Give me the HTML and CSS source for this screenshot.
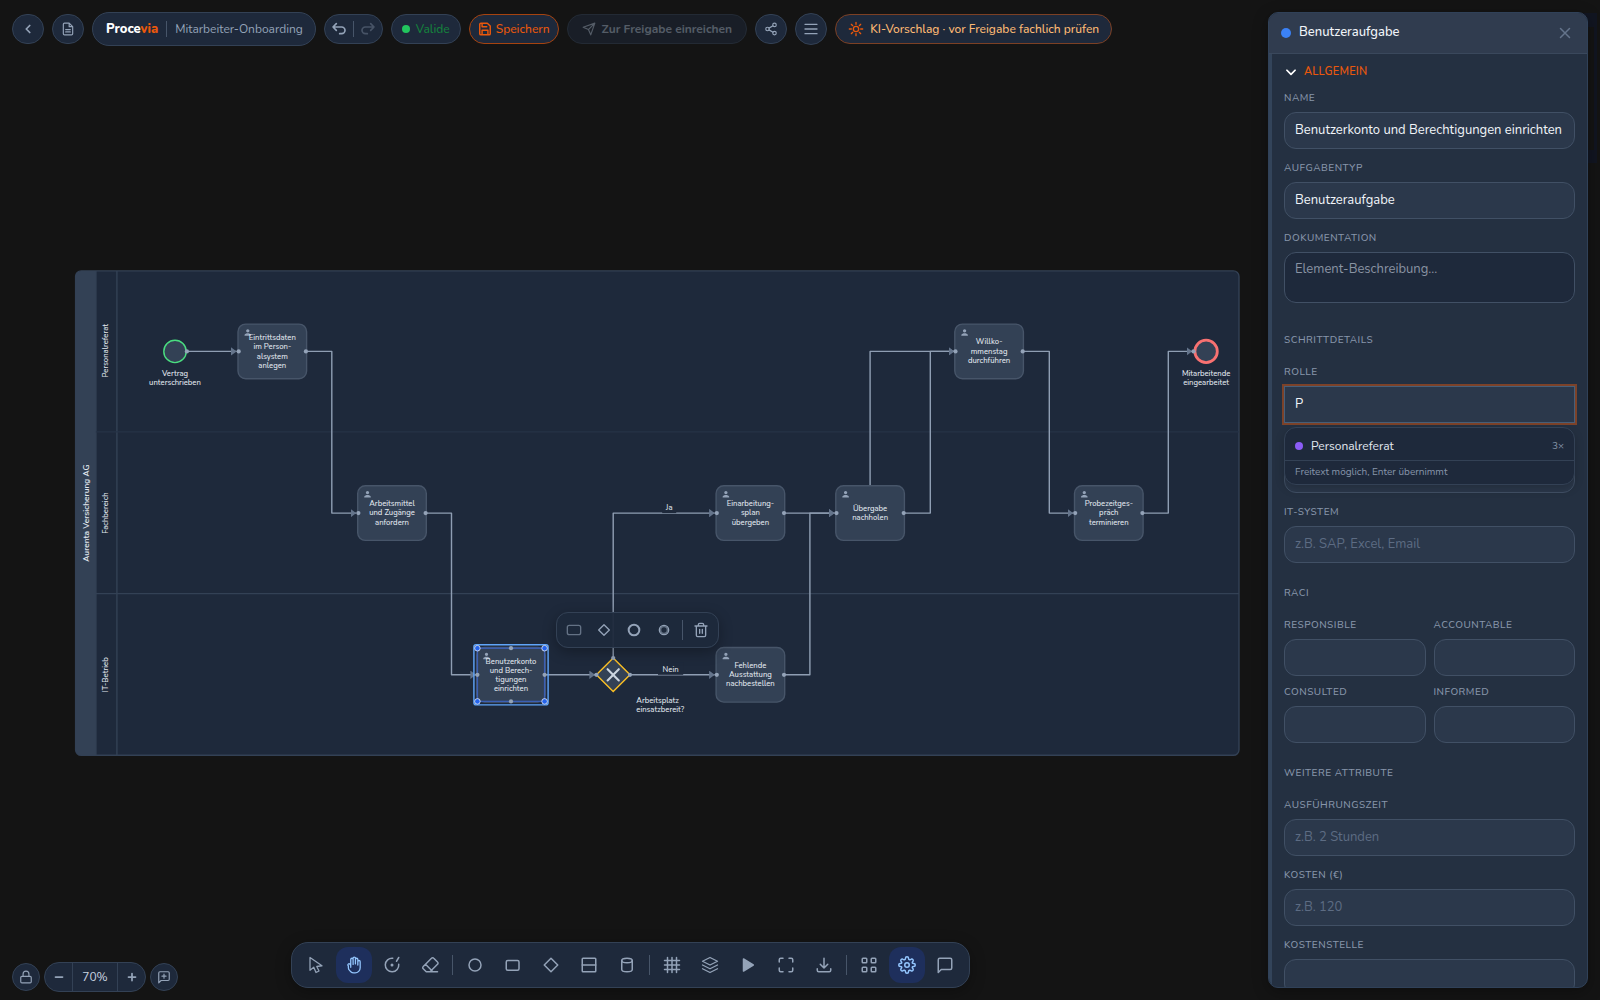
FILE: index.html
```html
<!DOCTYPE html>
<html lang="de">
<head>
<meta charset="utf-8">
<meta name="viewport" content="width=device-width, initial-scale=1">
<title>Procevia – Mitarbeiter-Onboarding</title>
<link rel="stylesheet" href="styles.css">
</head>
<body>
<div class="app">
  <main class="workspace">
    <svg class="diagram" role="img" aria-label="Prozessdiagramm Mitarbeiter-Onboarding">
      <defs>
        <symbol id="user" viewBox="0 0 24 24"><path d="M12 12c2.21 0 4-1.79 4-4s-1.79-4-4-4-4 1.79-4 4 1.79 4 4 4zm0 2c-2.67 0-8 1.34-8 4v2h16v-2c0-2.66-5.33-4-8-4z"/></symbol>
        <marker id="arrow" viewBox="0 0 8 12" refX="8" refY="6" markerWidth="8" markerHeight="12" markerUnits="userSpaceOnUse" orient="auto"><path class="arrowhead" d="M0 0 8 6 0 12z"/></marker>
      </defs>
      <g transform="scale(.7)">
        <rect class="pool" x="108" y="387" width="1662" height="692" rx="8"/>
        <path class="pool-title" d="M137 387H116a8 8 0 0 0-8 8v676a8 8 0 0 0 8 8h21z"/>
        <path class="lane-edge" d="M137 387V1079M167 387V1079M137 848H1770"/>
        <path class="lane-edge lane-edge-faint" d="M137 617H1770"/>
        <text class="pool-name" text-anchor="middle" transform="translate(127 733) rotate(-90)">Aurenta Versicherung AG</text>
        <text class="lane-name" text-anchor="middle" transform="translate(154 501) rotate(-90)">Personalreferat</text>
        <text class="lane-name" text-anchor="middle" transform="translate(154 733) rotate(-90)">Fachbereich</text>
        <text class="lane-name" text-anchor="middle" transform="translate(154 964) rotate(-90)">IT-Betrieb</text>

        <g class="flows" marker-end="url(#arrow)">
          <path d="M268 502H338"/>
          <path d="M437 502H474V733H509"/>
          <path d="M608 733H645V964H680"/>
          <path d="M778 964H850"/>
          <path d="M902 964H1021"/>
          <path d="M876 940V733H1021"/>
          <path d="M1120 733H1192"/>
          <path d="M1120 964H1157V733H1192"/>
          <path d="M1243 693V502H1363"/>
          <path d="M1291 733H1329V502H1363"/>
          <path d="M1462 502H1499V733H1533"/>
          <path d="M1632 733H1669V502H1703"/>
        </g>
        <rect class="flow-label-bg" x="946" y="716" width="20" height="17"/>
        <rect class="flow-label-bg" x="940" y="947" width="36" height="17"/>
        <text class="label" text-anchor="middle" x="956" y="729">Ja</text>
        <text class="label" text-anchor="middle" x="958" y="960">Nein</text>

        <circle class="event start" cx="250" cy="502" r="16"/>
        <text class="label" text-anchor="middle" x="250" y="537">Vertrag<tspan x="250" dy="1.2em">unterschrieben</tspan></text>
        <circle class="event end" cx="1723" cy="502" r="16"/>
        <text class="label" text-anchor="middle" x="1723" y="537">Mitarbeitende<tspan x="1723" dy="1.2em">eingearbeitet</tspan></text>

        <path class="gateway" d="M876 940 900 964 876 988 852 964z"/>
        <path class="gateway-x" d="M868 956 884 972M884 956 868 972"/>
        <text class="label" x="909" y="1004">Arbeitsplatz<tspan x="909" dy="1.2em">einsatzbereit?</tspan></text>

        <g class="task" transform="translate(389 502)">
          <rect x="-49" y="-39" width="98" height="78" rx="11"/>
          <use href="#user" x="-42" y="-34" width="14" height="14"/>
          <text text-anchor="middle" y="-16">Eintrittsdaten<tspan x="0" dy="1.2em">im Person-</tspan><tspan x="0" dy="1.2em">alsystem</tspan><tspan x="0" dy="1.2em">anlegen</tspan></text>
        </g>
        <g class="task" transform="translate(560 733)">
          <rect x="-49" y="-39" width="98" height="78" rx="11"/>
          <use href="#user" x="-42" y="-34" width="14" height="14"/>
          <text text-anchor="middle" y="-10">Arbeitsmittel<tspan x="0" dy="1.2em">und Zugänge</tspan><tspan x="0" dy="1.2em">anfordern</tspan></text>
        </g>
        <g class="task" transform="translate(730 964)">
          <rect x="-49" y="-39" width="98" height="78" rx="11"/>
          <use href="#user" x="-42" y="-34" width="14" height="14"/>
          <text text-anchor="middle" y="-16">Benutzerkonto<tspan x="0" dy="1.2em">und Berech-</tspan><tspan x="0" dy="1.2em">tigungen</tspan><tspan x="0" dy="1.2em">einrichten</tspan></text>
          <rect class="selection-ring" x="-53" y="-43" width="106" height="86" rx="3"/>
          <rect class="selection-box" x="-48" y="-38" width="96" height="76"/>
        </g>
        <g class="task" transform="translate(1072 733)">
          <rect x="-49" y="-39" width="98" height="78" rx="11"/>
          <use href="#user" x="-42" y="-34" width="14" height="14"/>
          <text text-anchor="middle" y="-10">Einarbeitung-<tspan x="0" dy="1.2em">splan</tspan><tspan x="0" dy="1.2em">übergeben</tspan></text>
        </g>
        <g class="task" transform="translate(1072 964)">
          <rect x="-49" y="-39" width="98" height="78" rx="11"/>
          <use href="#user" x="-42" y="-34" width="14" height="14"/>
          <text text-anchor="middle" y="-10">Fehlende<tspan x="0" dy="1.2em">Ausstattung</tspan><tspan x="0" dy="1.2em">nachbestellen</tspan></text>
        </g>
        <g class="task" transform="translate(1243 733)">
          <rect x="-49" y="-39" width="98" height="78" rx="11"/>
          <use href="#user" x="-42" y="-34" width="14" height="14"/>
          <text text-anchor="middle" y="-3">Übergabe<tspan x="0" dy="1.2em">nachholen</tspan></text>
        </g>
        <g class="task" transform="translate(1413 502)">
          <rect x="-49" y="-39" width="98" height="78" rx="11"/>
          <use href="#user" x="-42" y="-34" width="14" height="14"/>
          <text text-anchor="middle" y="-10">Willko-<tspan x="0" dy="1.2em">mmenstag</tspan><tspan x="0" dy="1.2em">durchführen</tspan></text>
        </g>
        <g class="task" transform="translate(1584 733)">
          <rect x="-49" y="-39" width="98" height="78" rx="11"/>
          <use href="#user" x="-42" y="-34" width="14" height="14"/>
          <text text-anchor="middle" y="-10">Probezeitges-<tspan x="0" dy="1.2em">präch</tspan><tspan x="0" dy="1.2em">terminieren</tspan></text>
        </g>

        <g class="ports">
          <circle cx="267" cy="502" r="3"/><circle cx="1705" cy="502" r="3"/>
          <circle cx="341" cy="502" r="3"/><circle cx="437" cy="502" r="3"/>
          <circle cx="512" cy="733" r="3"/><circle cx="608" cy="733" r="3"/>
          <circle cx="682" cy="964" r="3"/><circle cx="778" cy="964" r="3"/><circle cx="730" cy="926" r="3"/><circle cx="730" cy="1002" r="3"/>
          <circle cx="852" cy="964" r="3"/><circle cx="900" cy="964" r="3"/><circle cx="876" cy="940" r="3"/>
          <circle cx="1024" cy="733" r="3"/><circle cx="1120" cy="733" r="3"/>
          <circle cx="1024" cy="964" r="3"/><circle cx="1120" cy="964" r="3"/>
          <circle cx="1195" cy="733" r="3"/><circle cx="1291" cy="733" r="3"/>
          <circle cx="1365" cy="502" r="3"/><circle cx="1461" cy="502" r="3"/>
          <circle cx="1536" cy="733" r="3"/><circle cx="1632" cy="733" r="3"/>
        </g>
        <g class="handles">
          <circle cx="682" cy="926" r="4"/><circle cx="778" cy="926" r="4"/><circle cx="682" cy="1002" r="4"/><circle cx="778" cy="1002" r="4"/>
        </g>
      </g>
    </svg>

    <div class="context-pad" role="toolbar" aria-label="Elementaktionen">
      <button type="button" aria-label="Aufgabe anhängen"><svg class="i16" viewBox="0 0 24 24"><rect class="dim" x="2" y="5" width="20" height="14" rx="3"/></svg></button>
      <button type="button" aria-label="Gateway anhängen"><svg class="i16" viewBox="0 0 24 24"><path d="M12 4l8 8-8 8-8-8z"/></svg></button>
      <button type="button" aria-label="Endereignis anhängen"><svg class="i16" viewBox="0 0 24 24"><circle class="thick" cx="12" cy="12" r="8"/></svg></button>
      <button type="button" aria-label="Zwischenereignis anhängen"><svg class="i16" viewBox="0 0 24 24"><circle cx="12" cy="12" r="7"/><circle class="dim" cx="12" cy="12" r="5"/></svg></button>
      <span class="divider"></span>
      <button type="button" aria-label="Löschen"><svg class="i16" viewBox="0 0 24 24"><path d="M3 6h18M5 6v14a2 2 0 0 0 2 2h10a2 2 0 0 0 2-2V6M8 6V4a2 2 0 0 1 2-2h4a2 2 0 0 1 2 2v2M10 11v6M14 11v6"/></svg></button>
    </div>

    <header class="topbar">
      <button class="chip round" type="button" aria-label="Zurück"><svg class="i14" viewBox="0 0 24 24"><path class="bold" d="M15 18l-6-6 6-6"/></svg></button>
      <button class="chip round" type="button" aria-label="Dokument"><svg class="i14" viewBox="0 0 24 24"><path d="M14 2H6a2 2 0 0 0-2 2v16a2 2 0 0 0 2 2h12a2 2 0 0 0 2-2V8zM14 2v6h6M8 13h8M8 17h8"/></svg></button>
      <div class="chip title"><strong class="logo">Proce<span>via</span></strong><span class="divider"></span><span>Mitarbeiter-Onboarding</span></div>
      <div class="chip history">
        <button type="button" aria-label="Rückgängig"><svg class="i16" viewBox="0 0 24 24"><path class="semi" d="M8 14 3 9l5-5M3 9h13a5 5 0 0 1 0 10h-3"/></svg></button>
        <span class="divider"></span>
        <button type="button" aria-label="Wiederholen" disabled><svg class="i16" viewBox="0 0 24 24"><path class="semi" d="M16 14l5-5-5-5M21 9H8a5 5 0 0 0 0 10h3"/></svg></button>
      </div>
      <div class="chip status"><span class="dot"></span>Valide</div>
      <button class="chip save" type="button"><svg class="i14" viewBox="0 0 24 24"><path class="semi" d="M19 22H5a2 2 0 0 1-2-2V4a2 2 0 0 1 2-2h11l5 5v13a2 2 0 0 1-2 2zM7 2v6h8M7 22v-8h10v8"/></svg>Speichern</button>
      <button class="chip submit" type="button" disabled><svg class="i14" viewBox="0 0 24 24"><path d="M22 2 15 22l-4-9-9-4zM22 2 11 13"/></svg>Zur Freigabe einreichen</button>
      <button class="chip round" type="button" aria-label="Teilen"><svg class="i14" viewBox="0 0 24 24"><circle cx="18" cy="5" r="3"/><circle cx="6" cy="12" r="3"/><circle cx="18" cy="19" r="3"/><path d="M8.6 13.5l6.8 4M15.4 6.500l-6.800 4"/></svg></button>
      <button class="chip round menu" type="button" aria-label="Menü"><svg class="i16" viewBox="0 0 24 24"><path d="M3 5h18M3 12h18M3 19h18"/></svg></button>
      <div class="chip hint"><svg class="i16" viewBox="0 0 24 24"><circle cx="12" cy="12" r="4"/><path d="M12 2v3M12 19v3M2 12h3M19 12h3M5 5l2 2M17 17l2 2M5 19l2-2M17 7l2-2"/></svg>KI-Vorschlag · vor Freigabe fachlich prüfen</div>
    </header>

    <footer class="bottombar">
      <div class="zoom">
        <button class="chip small" type="button" aria-label="Sperren"><svg class="i14" viewBox="0 0 24 24"><rect x="3" y="11" width="18" height="11" rx="2"/><path d="M7 11V7a5 5 0 0 1 10 0v4"/></svg></button>
        <div class="chip zoom-level">
          <button type="button" aria-label="Verkleinern"><svg class="i14" viewBox="0 0 24 24"><path class="heavy" d="M6 12h12"/></svg></button>
          <output>70%</output>
          <button type="button" aria-label="Vergrößern"><svg class="i14" viewBox="0 0 24 24"><path class="heavy" d="M6 12h12M12 6v12"/></svg></button>
        </div>
        <button class="chip small" type="button" aria-label="Kommentar hinzufügen"><svg class="i14" viewBox="0 0 24 24"><path d="M3 22V5a2 2 0 0 1 2-2h14a2 2 0 0 1 2 2v11a2 2 0 0 1-2 2H7zM12 7v7M8.500 10.500h7"/></svg></button>
      </div>
      <div class="toolbar" role="toolbar" aria-label="Werkzeuge">
        <button type="button" aria-label="Auswahl"><svg class="i18" viewBox="0 0 24 24"><path class="thin" d="M4 2v17l5-4 3 7 4-2-3-6 7-1z"/></svg></button>
        <button class="active" type="button" aria-label="Hand"><svg class="i18" viewBox="0 0 24 24"><path class="thin" transform="matrix(-1 0 0 1 24 0)" d="M10.050 4.575a1.575 1.575 0 1 0-3.150 0v3m3.150-3v-1.500a1.575 1.575 0 0 1 3.150 0v1.500m-3.150 0 .075 5.925m3.075.75V4.575m0 0a1.575 1.575 0 0 1 3.150 0V15M6.900 7.575a1.575 1.575 0 1 0-3.150 0v8.175a6.750 6.750 0 0 0 6.750 6.750h2.018a5.250 5.250 0 0 0 3.712-1.538l1.732-1.732a5.250 5.250 0 0 0 1.538-3.712l.003-2.024a.668.668 0 0 1 .198-.471 1.575 1.575 0 1 0-2.228-2.228 3.818 3.818 0 0 0-1.120 2.687M6.900 7.575V12"/></svg></button>
        <button type="button" aria-label="Lasso"><svg class="i18" viewBox="0 0 24 24"><path d="M13 3a9 9 0 1 0 8 8M18 7l3-5"/><circle class="solid" cx="12" cy="12" r="1"/></svg></button>
        <button type="button" aria-label="Radierer"><svg class="i18" viewBox="0 0 24 24"><path d="M7 21l-4-4a2 2 0 0 1 0-3L14 3a2 2 0 0 1 3 0l5 5a2 2 0 0 1 0 3L12 21M22 21H7M6 11l9 9"/></svg></button>
        <span class="divider"></span>
        <button type="button" aria-label="Ereignis"><svg class="i18" viewBox="0 0 24 24"><circle cx="12" cy="12" r="8"/></svg></button>
        <button type="button" aria-label="Aufgabe"><svg class="i18" viewBox="0 0 24 24"><rect x="3" y="6" width="17" height="13" rx="2"/></svg></button>
        <button type="button" aria-label="Gateway"><svg class="i18" viewBox="0 0 24 24"><path d="M12 3l9 9-9 9-9-9z"/></svg></button>
        <button type="button" aria-label="Pool"><svg class="i18" viewBox="0 0 24 24"><rect x="3" y="3" width="18" height="18" rx="1"/><path d="M3 12h18"/></svg></button>
        <button type="button" aria-label="Datenspeicher"><svg class="i18" viewBox="0 0 24 24"><ellipse cx="12" cy="6" rx="7" ry="3"/><path d="M5 6v12c0 2 3 3 7 3s7-1 7-3V6"/></svg></button>
        <span class="divider"></span>
        <button type="button" aria-label="Raster"><svg class="i18" viewBox="0 0 24 24"><path d="M6 2v20M12 2v20M18 2v20M2 6h20M2 12h20M2 18h20"/></svg></button>
        <button type="button" aria-label="Ebenen"><svg class="i18" viewBox="0 0 24 24"><path class="thin" d="M12 2 2 7l10 5 10-5zM2 12l10 5 10-5M2 17l10 5 10-5"/></svg></button>
        <button type="button" aria-label="Simulation"><svg class="i18" viewBox="0 0 24 24"><path class="solid" d="M6 4l13 8-13 8z"/></svg></button>
        <button type="button" aria-label="Einpassen"><svg class="i18" viewBox="0 0 24 24"><path d="M8 3H5a2 2 0 0 0-2 2v3M16 3h3a2 2 0 0 1 2 2v3M8 21H5a2 2 0 0 1-2-2v-3M16 21h3a2 2 0 0 0 2-2v-3"/></svg></button>
        <button type="button" aria-label="Exportieren"><svg class="i18" viewBox="0 0 24 24"><path d="M3 17v2a2 2 0 0 0 2 2h14a2 2 0 0 0 2-2v-2M7 11l5 5 5-5M12 3v13"/></svg></button>
        <span class="divider"></span>
        <button type="button" aria-label="Übersicht"><svg class="i18" viewBox="0 0 24 24"><rect x="3" y="3" width="6" height="6" rx="1"/><rect x="15" y="3" width="6" height="6" rx="1"/><rect x="3" y="15" width="6" height="6" rx="1"/><rect x="15" y="15" width="6" height="6" rx="1"/></svg></button>
        <button class="active" type="button" aria-label="Eigenschaften"><svg class="i18" viewBox="0 0 24 24"><circle cx="12" cy="12" r="3"/><path d="M10 3a2 2 0 0 1 4 0c0 2 2 3 4 1a2 2 0 0 1 2 3c-2 2-1 3 1 3a2 2 0 0 1 0 4c-2 0-3 1-1 3a2 2 0 0 1-2 3c-2-2-4-1-4 1a2 2 0 0 1-4 0c0-2-2-3-4-1a2 2 0 0 1-2-3c2-2 1-3-1-3a2 2 0 0 1 0-4c2 0 3-1 1-3a2 2 0 0 1 2-3c2 2 4 1 4-1z"/></svg></button>
        <button type="button" aria-label="Kommentare"><svg class="i18" viewBox="0 0 24 24"><path d="M3 22V5a2 2 0 0 1 2-2h14a2 2 0 0 1 2 2v11a2 2 0 0 1-2 2H7z"/></svg></button>
      </div>
    </footer>
  </main>

  <div class="panel-shade" aria-hidden="true"></div>
  <aside class="panel" aria-label="Eigenschaften">
    <header class="panel-head">
      <span class="dot"></span>
      <h2>Benutzeraufgabe</h2>
      <button type="button" aria-label="Schließen"><svg class="i18" viewBox="0 0 24 24"><path d="M18 6 6 18M6 6l12 12"/></svg></button>
    </header>
    <form class="panel-body">
      <section class="group">
        <button class="group-toggle" type="button" aria-expanded="true"><svg class="i14" viewBox="0 0 24 24"><path class="heavy" d="M5 9l7 7 7-7"/></svg>ALLGEMEIN</button>
        <div class="field"><label for="f-name">NAME</label><input id="f-name" type="text" value="Benutzerkonto und Berechtigungen einrichten"></div>
        <div class="field"><label for="f-type">AUFGABENTYP</label><select id="f-type"><option>Benutzeraufgabe</option></select></div>
        <div class="field field-doc"><label for="f-doc">DOKUMENTATION</label><textarea id="f-doc" placeholder="Element-Beschreibung..."></textarea></div>
      </section>
      <section class="group">
        <h3>SCHRITTDETAILS</h3>
        <div class="field combo">
          <label for="f-role">ROLLE</label>
          <input id="f-role" class="focused" type="text" value="P" autocomplete="off">
          <div class="suggestions">
            <button type="button" class="suggestion"><span class="dot"></span>Personalreferat<small>3×</small></button>
            <p>Freitext möglich, Enter übernimmt</p>
          </div>
        </div>
        <div class="field field-covered"><input type="text" aria-label="Abteilung"></div>
        <div class="field"><label for="f-sys">IT-SYSTEM</label><input id="f-sys" type="text" placeholder="z.B. SAP, Excel, Email"></div>
      </section>
      <section class="group">
        <h3>RACI</h3>
        <div class="raci">
          <div class="field"><label for="f-r">RESPONSIBLE</label><input id="f-r" type="text"></div>
          <div class="field"><label for="f-a">ACCOUNTABLE</label><input id="f-a" type="text"></div>
          <div class="field"><label for="f-c">CONSULTED</label><input id="f-c" type="text"></div>
          <div class="field"><label for="f-i">INFORMED</label><input id="f-i" type="text"></div>
        </div>
      </section>
      <section class="group">
        <h3>WEITERE ATTRIBUTE</h3>
        <div class="field"><label for="f-time">AUSFÜHRUNGSZEIT</label><input id="f-time" type="text" placeholder="z.B. 2 Stunden"></div>
        <div class="field"><label for="f-cost">KOSTEN (€)</label><input id="f-cost" type="text" placeholder="z.B. 120"></div>
        <div class="field"><label for="f-center">KOSTENSTELLE</label><input id="f-center" type="text"></div>
      </section>
    </form>
  </aside>
</div>
</body>
</html>
```
FILE: styles.css
```css
:root {
  --bg: #141414;
  --surface: #1e293b;
  --line: #334155;
  --muted: #94a3b8;
  --text: #f1f5f9;
  --accent: #ea580c;
}
* { box-sizing: border-box; }
body {
  margin: 0;
  background: var(--bg);
  color: var(--text);
  font: 12px/16px Nunito, "Nunito Sans", "Open Sans", sans-serif;
}
button, input, select, textarea { font: inherit; color: inherit; }
button { padding: 0; border: 0; background: none; }
h2, h3, p { margin: 0; }
svg { display: block; flex: none; }
button svg, .hint svg {
  fill: none;
  stroke: currentColor;
  stroke-width: 2;
  stroke-linecap: round;
  stroke-linejoin: round;
}
.i14 { width: 14px; height: 14px; }
.i16 { width: 16px; height: 16px; }
.i18 { width: 18px; height: 18px; }
.thin { stroke-width: 1.7; }
.semi { stroke-width: 2.5; }
.bold, .thick, .heavy { stroke-width: 3; }
.dim { opacity: .6; }
.solid { fill: currentColor; }
.divider { flex: none; width: 1px; height: 16px; background: #475569; }
.dot { flex: none; width: 8px; height: 8px; border-radius: 50%; background: #22c55e; }

.app {
  position: relative;
  display: grid;
  grid-template-columns: minmax(0, 1fr) 320px;
  column-gap: 7px;
  height: 100vh;
  padding-right: 12px;
}
.workspace {
  position: relative;
  display: flex;
  flex-direction: column;
  justify-content: space-between;
  min-width: 0;
}

/* Diagram canvas */
.diagram { position: absolute; inset: 0; width: 100%; height: 100%; }
.diagram text { font-size: 11px; font-weight: 500; fill: #e2e8f0; }
.diagram .pool-name { font-size: 12px; font-weight: 600; }
.pool { fill: var(--surface); stroke: var(--line); stroke-width: 2; }
.pool-title { fill: #334155; }
.lane-edge { fill: none; stroke: var(--line); stroke-width: 2; }
.lane-edge-faint { stroke: #263347; }
.flows { fill: none; stroke: #8f9eb3; stroke-width: 2; stroke-linejoin: round; }
.arrowhead { fill: #64748b; stroke: none; }
.flow-label-bg { fill: var(--surface); }
.event { fill: #334155; stroke-width: 2; }
.start { stroke: #4ade80; }
.end { stroke: #f87171; stroke-width: 4; }
.gateway { fill: #334155; stroke: #fbbf24; stroke-width: 2; }
.gateway-x { stroke: #cbd5e1; stroke-width: 3; stroke-linecap: round; }
.task rect { fill: #334155; stroke: #475569; stroke-width: 2; }
.task use { fill: var(--muted); }
.task .selection-ring { fill: none; stroke: #60a5fa; stroke-width: 2; }
.task .selection-box { fill: none; stroke: #3b5fb5; stroke-width: 2; }
.ports { fill: var(--muted); }
.handles { fill: #2563eb; stroke: #fff; stroke-width: 1; }

.context-pad {
  position: absolute;
  left: 556px;
  top: 612px;
  display: flex;
  align-items: center;
  gap: 2px;
  padding: 3px;
  border: 1px solid var(--line);
  border-radius: 12px;
  background: rgba(30, 41, 59, .95);
  box-shadow: 0 4px 14px rgba(0, 0, 0, .3);
  color: var(--muted);
}
.context-pad button { display: grid; place-items: center; width: 28px; height: 28px; }
.context-pad .divider { height: 20px; margin: 0 2px; }

/* Top bar */
.topbar {
  position: relative;
  display: flex;
  align-items: center;
  gap: 8px;
  height: 58px;
  padding: 0 12px;
}
.chip {
  flex: none;
  display: flex;
  align-items: center;
  height: 30px;
  border: 1px solid var(--line);
  border-radius: 17px;
  background: var(--surface);
  color: var(--muted);
  font-weight: 500;
  white-space: nowrap;
}
.round { justify-content: center; width: 32px; }
.menu { height: 32px; }
.title { gap: 8px; height: 34px; padding: 0 12px 0 13px; font-weight: 400; }
.logo { color: #fff; font-size: 13px; font-weight: 800; }
.logo span { color: var(--accent); }
.history button { display: grid; place-items: center; width: 28px; height: 28px; }
.history button:disabled { opacity: .35; }
.status { gap: 6px; padding: 0 10px; color: #15803d; }
.save { gap: 4px; padding: 0 8px; border-color: #a6430f; color: var(--accent); }
.submit { gap: 6px; padding: 0 14px; font-weight: 700; opacity: .5; }
.hint { gap: 6px; padding: 0 12px; border-color: #7c4024; color: #fdba74; }
.hint svg { color: var(--accent); }

/* Bottom bar */
.bottombar {
  position: relative;
  display: grid;
  grid-template-columns: 1fr auto 1fr;
  align-items: end;
  padding-bottom: 8px;
}
.zoom { display: flex; align-items: center; gap: 4px; padding-left: 12px; }
.small { justify-content: center; width: 28px; height: 28px; }
.zoom-level { font-weight: 400; }
.zoom-level button { display: grid; place-items: center; width: 27px; height: 28px; }
.zoom-level output {
  width: 46px;
  border: solid var(--line);
  border-width: 0 1px;
  line-height: 28px;
  text-align: center;
  color: #cbd5e1;
}
.toolbar {
  display: flex;
  align-items: center;
  gap: 2px;
  height: 46px;
  margin-bottom: 4px;
  padding: 0 6px;
  border: 1px solid var(--line);
  border-radius: 17px;
  background: var(--surface);
  box-shadow: 0 4px 16px rgba(0, 0, 0, .3);
  color: var(--muted);
}
.toolbar button { display: grid; place-items: center; width: 36px; height: 36px; border-radius: 12px; }
.toolbar .divider { height: 20px; margin: 0 2px; }
.toolbar .active { background: #1e2f5c; color: #93c5fd; }

/* Properties panel */
.panel-shade {
  position: absolute;
  top: 13px;
  right: 3px;
  width: 14px;
  height: 150px;
  border: solid #111521;
  border-width: 14px 3px 13px 0;
}
.panel {
  position: relative;
  display: flex;
  flex-direction: column;
  min-height: 0;
  margin: 12px 0;
  overflow: hidden;
  border: 1px solid #304158;
  border-radius: 10px;
  background: #243041;
  box-shadow: 0 4px 16px rgba(0, 0, 0, .3);
}
.panel-head {
  flex: none;
  display: flex;
  align-items: center;
  gap: 8px;
  height: 41px;
  padding: 0 13px 0 12px;
  border-bottom: 1px solid #3a485c;
  background: #303c4f;
}
.panel-head .dot { width: 10px; height: 10px; background: #3b82f6; }
.panel-head h2 { flex: 1; padding-bottom: 2px; font-size: 13px; font-weight: 500; line-height: 18px; }
.panel-head button { color: #64748b; }
.panel-body {
  flex: 1;
  min-height: 0;
  overflow: hidden;
  padding: 10px 12px 0 12px;
  border-left: 3px solid #33445a;
}
.group { display: flex; flex-direction: column; gap: 12px; margin-bottom: 23px; }
.group-toggle {
  display: flex;
  align-items: center;
  gap: 6px;
  height: 15px;
  color: var(--accent);
  font-size: 11px;
  font-weight: 600;
  letter-spacing: .02em;
}
.group-toggle svg { color: #fff; }
label, h3 {
  display: block;
  color: #8795aa;
  font-size: 10px;
  font-weight: 500;
  line-height: 15px;
  letter-spacing: .05em;
}
h3 { margin-bottom: 5px; }
.field { display: flex; flex-direction: column; gap: 6px; }
.field-doc { padding-bottom: 7px; }
input, select, textarea {
  display: block;
  width: 100%;
  height: 37px;
  padding: 0 10px 2px;
  border: 1px solid #415065;
  border-radius: 12px;
  outline: 0;
  background: #2b384b;
  color: var(--text);
  font-size: 13px;
  appearance: none;
}
textarea { height: 51px; padding-top: 6px; line-height: 20px; background: var(--surface); resize: none; }
::placeholder { color: #5d6c83; opacity: 1; }
textarea::placeholder { color: #8a94a3; }
.focused { border-radius: 0; border-color: #475f79; outline: 2px solid #7c4229; }
.combo { position: relative; }
.suggestions {
  position: absolute;
  top: calc(100% + 4px);
  left: 0;
  right: 0;
  border: 1px solid var(--line);
  border-radius: 12px;
  background: var(--surface);
  box-shadow: 0 4px 10px rgba(0, 0, 0, .2);
}
.suggestion {
  display: flex;
  align-items: center;
  gap: 8px;
  width: 100%;
  height: 33px;
  padding: 4px 10px 0;
  border-bottom: 1px solid var(--line);
  color: #e2e8f0;
}
.suggestion .dot { background: #8b5cf6; }
.suggestion small { margin-left: auto; color: #8795aa; font-size: 10px; }
.suggestions p { padding: 4px 10px 4px; color: #8795aa; font-size: 10px; line-height: 15px; }
.field-covered { padding-top: 21px; }
.raci { display: grid; grid-template-columns: 1fr 1fr; gap: 9px 8px; }
```
